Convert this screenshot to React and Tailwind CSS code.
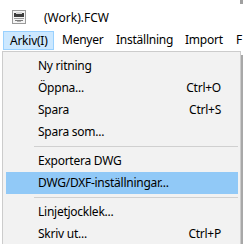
import React from "react";

const font = { fontFamily: '"Noto Sans", "Segoe UI", sans-serif' };

function Item({ label, shortcut, active }) {
  return (
    <div
      className={
        "h-[22px] flex items-center pl-[32px] pr-[17px] ml-[3px] mr-[2px] " +
        (active ? "bg-[#91c9f7]" : "")
      }
    >
      <span className="flex-1">{label}</span>
      {shortcut && <span>{shortcut}</span>}
    </div>
  );
}

function Sep() {
  return (
    <div className="h-[7px] flex items-center pl-[31px] pr-[2px]">
      <div className="h-px w-full bg-[#d0d0d0]" />
    </div>
  );
}

export default function App() {
  return (
    <div
      className="w-[243px] h-[244px] overflow-hidden bg-white text-[12px] tracking-[-0.25px] text-black leading-none relative"
      style={font}
    >
      <div className="absolute right-0 top-0 w-[3px] h-[4px] bg-[#a0a0a0]" />
      <div className="h-[30px] flex items-center">
        <svg width="14" height="14" viewBox="0 0 14 14" className="ml-[12px] mt-[4px]">
          <rect x="0.5" y="0.5" width="13" height="13" fill="#f4f4f4" stroke="#9a9a9a" />
          <rect x="2" y="3" width="10" height="4" fill="#3c3c3c" />
          <rect x="4" y="2" width="6" height="2" fill="#d8d8d8" />
          <rect x="2" y="8" width="10" height="1" fill="#9a9a9a" />
          <rect x="3" y="10" width="8" height="1" fill="#7a7a7a" />
          <rect x="5" y="11" width="4" height="1" fill="#b0b0b0" />
        </svg>
        <span className="ml-[18px] mt-[6px] tracking-normal">(Work).FCW</span>
      </div>
      <div className="h-[21px] flex items-start whitespace-nowrap">
        <div className="ml-[3px] mt-[1px] h-[19px] w-[51px] pl-[6px] flex items-center bg-[#cce8ff] border border-[#99d1ff]">
          Arkiv(I)
        </div>
        <div className="h-[20px] flex items-center ml-[8px]">
          <span className="w-[54px]">Menyer</span>
          <span className="w-[69px]">Inställning</span>
          <span className="w-[51px]">Import</span>
          <span>F</span>
        </div>
      </div>
      <div className="flex">
        <div className="ml-[2px] w-[239px] border-l border-t border-r border-[#cccccc] bg-[#f2f2f2] pt-[3px]">
          <Item label="Ny ritning" />
          <Item label="Öppna..." shortcut="Ctrl+O" />
          <Item label="Spara" shortcut="Ctrl+S" />
          <Item label="Spara som..." />
          <Sep />
          <Item label="Exportera DWG" />
          <Item label="DWG/DXF-inställningar..." active />
          <Sep />
          <Item label="Linjetjocklek..." />
          <Item label="Skriv ut..." shortcut="Ctrl+P" />
        </div>
        <div className="w-[2px] mt-[4px] bg-[#a8a8a8]" />
      </div>
    </div>
  );
}
